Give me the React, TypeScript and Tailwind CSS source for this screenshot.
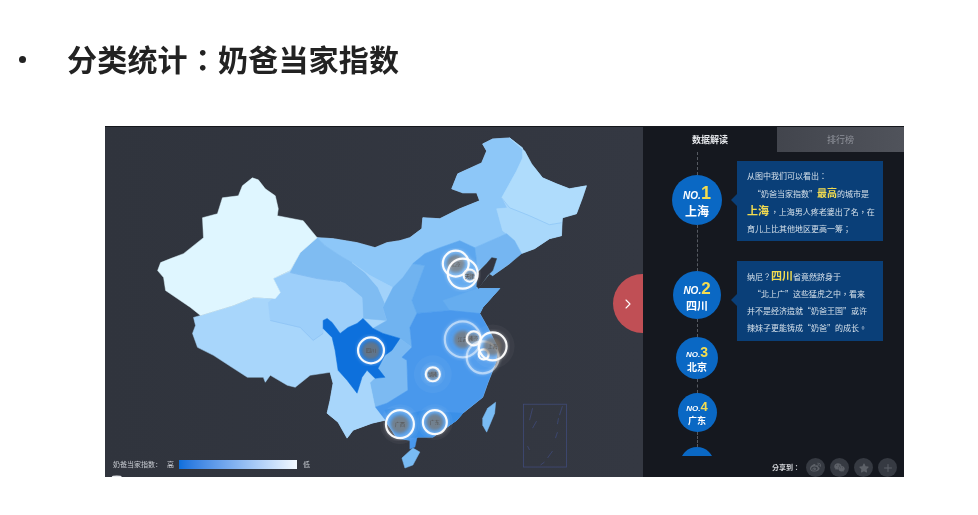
import React from "react";
import { ChevronRight, Plus } from "lucide-react";
import { FaWeibo, FaWeixin, FaStar } from "react-icons/fa";

const cjk = "font-['Noto_Sans_CJK_SC','Noto_Sans',sans-serif]";
const cjkCentered = "font-['Noto_Sans_CJK_TC','Noto_Sans',sans-serif]";

const provinces = [
  // mainland base, everything else is laid on top of it
  { fill: "#a8d6fb", points: "317,237 333,238 357,242 375,247 387,242 400,240 410,237 422,228 423,217 440,218 460,208 480,200 477,192 463,192 452,188 458,173 482,162 487,150 483,143 493,138 510,137 525,150 532,163 543,177 557,183 570,188 587,185 583,197 577,213 563,217 562,235 550,238 535,248 520,253 510,263 493,275 490,273 478,288 500,288 483,307 480,313 488,327 498,347 497,360 488,383 483,397 463,413 457,420 433,437 418,437 410,440 397,438 385,420 372,423 353,430 347,438 338,422 327,413 330,400 333,383 330,372 310,375 295,387 287,385 270,375 265,382 263,377 247,377 233,368 213,355 197,347 192,333 195,325 193,317 200,315 233,305 253,297 275,298 280,292 273,278 290,270 300,252" },
  { fill: "#8dc7f8", points: "317,237 333,238 357,242 375,247 387,242 400,240 410,237 422,228 423,217 440,218 460,208 480,200 477,192 463,192 452,188 458,173 482,162 487,150 483,143 493,138 510,137 523,147 523,157 517,170 502,197 507,207 497,208 503,230 507,233 475,247 460,240 440,247 425,253 413,263 403,277 393,287 370,275 352,262 340,255 325,245" },
  { fill: "#afdcfc", points: "510,137 525,150 532,163 543,177 557,183 570,188 587,185 583,197 577,213 563,217 562,222 550,224 540,220 530,215 510,207 502,197 517,170 523,157 523,147" },
  { fill: "#a9d8fb", points: "497,208 510,207 530,215 550,224 562,222 562,235 550,238 535,248 522,253 515,240 507,233 503,230" },
  { fill: "#74b6f2", points: "475,247 507,233 515,240 522,253 510,263 493,275 490,273 496,257 478,270" },
  { fill: "#7fbcf2", points: "317,237 325,245 340,255 352,262 365,272 378,287 386,305 387,320 363,318 362,297 345,283 340,281 317,278 290,272 300,252" },
  { fill: "#a2d2fa", points: "352,262 370,275 393,287 383,307 387,320 386,305 378,287 365,272" },
  { fill: "#9dcffa", points: "273,278 290,272 317,278 340,281 345,283 362,297 363,318 357,323 348,327 340,333 332,322 327,318 323,320 323,333 313,340 300,327 270,320 268,302 280,292" },
  { fill: "#dff6ff", points: "252,177 258,179 265,188 275,195 278,208 277,215 303,220 317,237 300,252 290,270 273,278 280,292 275,298 253,297 233,305 200,315 190,307 165,290 163,277 157,270 160,262 170,258 183,253 203,237 202,217 217,213 222,197 238,195 242,185" },
  { fill: "#6fb3f0", points: "393,287 403,277 413,263 425,265 412,300 417,313 410,327 412,347 400,338 383,333 373,328 387,320 383,307" },
  { fill: "#5ba6ee", points: "413,263 425,253 440,247 460,240 475,247 478,270 477,288 500,288 483,307 480,313 450,310 417,313 412,300 425,265" },
  { fill: "#66adef", points: "443,300 478,288 500,288 483,307 480,313 450,310" },
  { fill: "#7bbaf2", points: "385,355 400,338 412,347 402,357 407,360 408,390 387,403 375,407 370,383 375,378 385,377 378,368" },
  { fill: "#4998ec", points: "410,327 417,313 450,310 480,313 488,327 498,347 497,360 488,383 483,397 463,413 457,420 433,437 418,437 410,440 397,438 385,420 375,407 387,403 408,390 407,360 402,357 412,347" },
  { fill: "#3b90e8", points: "418,437 433,437 457,420 463,413 445,412 425,410 408,414 395,408 385,410 397,438 410,440" },
  { fill: "#a8d6fb", points: "330,372 338,370 347,380 357,393 363,377 370,383 375,407 385,420 372,423 353,430 347,438 338,422 327,413 330,400 333,383" },
  { fill: "#0b6fdc", points: "323,320 327,318 332,322 340,333 348,327 357,323 363,318 373,328 383,333 400,338 392,350 385,355 378,368 385,377 375,378 367,370 362,377 357,393 347,380 338,370 335,350 332,337 323,328" },
  { fill: "#79bbf3", points: "402,458 413,448 420,452 413,465 405,468" },
  { fill: "#79bbf3", points: "483,418 488,408 496,402 495,413 490,425 487,432 483,425" },
  { fill: "#4998ec", points: "410,438 417,438 415,447 410,449" },
  { fill: "#32363f", points: "492,257 497,258 493,270 488,275 479,288 477,286 478,272 487,263" },
];

const rings = [
  { x: 456, y: 263, r: 13, label: "北京", glow: 0 },
  { x: 463, y: 273, r: 15, label: "", glow: 0 },
  { x: 470, y: 275, r: 6, label: "天津", glow: 0 },
  { x: 463, y: 339, r: 18, label: "江苏", glow: 0 },
  { x: 474, y: 338, r: 7, label: "南京", glow: 0 },
  { x: 483, y: 357, r: 16, label: "", glow: 0 },
  { x: 484, y: 354, r: 5, label: "", glow: 0 },
  { x: 493, y: 346, r: 14, label: "上海", glow: 22 },
  { x: 433, y: 374, r: 7, label: "湖南", glow: 19 },
  { x: 400, y: 424, r: 14, label: "广西", glow: 20 },
  { x: 435, y: 422, r: 12, label: "广东", glow: 18 },
  { x: 371, y: 350, r: 13, label: "四川", glow: 0 },
];

const ranks = [
  { no: "1", city: "上海", size: "w-[50px] h-[50px]", noText: "text-[10px]", numText: "text-[18px]", cityText: "text-[12px]", before: "h-[23px]" },
  { no: "2", city: "四川", size: "w-[48px] h-[48px]", noText: "text-[10px]", numText: "text-[17px]", cityText: "text-[11px]", before: "h-[46px]" },
  { no: "3", city: "北京", size: "w-[42px] h-[42px]", noText: "text-[8px]", numText: "text-[14px]", cityText: "text-[10px]", before: "h-[18px]" },
  { no: "4", city: "广东", size: "w-[39px] h-[39px]", noText: "text-[8px]", numText: "text-[13px]", cityText: "text-[9px]", before: "h-[14px]" },
];

const MapDrawing = () => (
  <svg viewBox="105 126 538 351" className="absolute inset-0 w-full h-full">
    <defs>
      <filter id="soft">
        <feGaussianBlur stdDeviation="0.5" />
      </filter>
      <filter id="dot">
        <feGaussianBlur stdDeviation="1.4" />
      </filter>
    </defs>
    <g filter="url(#soft)">
      {provinces.map((p, i) => (
        <polygon key={i} points={p.points} fill={p.fill} stroke={p.fill} strokeWidth="0.5" strokeLinejoin="round" />
      ))}
      <polyline points="290,272 317,278 340,281" fill="none" stroke="#6daeea" strokeWidth="0.5" />
      <polyline points="270,320 300,327 313,340 323,333" fill="none" stroke="#84bdf0" strokeWidth="0.5" />
      <polyline points="502,197 510,207 530,215 550,224 562,222" fill="none" stroke="#80bdf2" strokeWidth="0.5" />
    </g>
    <g fill="none" stroke="#3f4a78" strokeWidth="0.8" filter="url(#soft)">
      <rect x="524" y="404" width="43" height="63" />
      <path d="M533 408 L530 420 M563 406 L560 415 M533 428 L537 421 M558 432 L556 438 M530 450 L528 446 M553 451 L548 458 M541 465 L545 462 M558 424 L559 418" />
    </g>
    <ellipse cx="116" cy="477" rx="5" ry="1.5" fill="#e8eaee" />
    {rings.map((m, i) => (
      <g key={i}>
        {m.glow > 0 && <circle cx={m.x} cy={m.y} r={m.glow} fill="#ffffff" fillOpacity="0.04" />}
        {m.glow > 0 && <circle cx={m.x} cy={m.y} r={m.glow * 0.65} fill="#ffffff" fillOpacity="0.05" />}
        <circle cx={m.x} cy={m.y} r={m.r} fill="#ffffff" fillOpacity="0.06" stroke="#ffffff" strokeOpacity="0.25" strokeWidth="3.5" filter="url(#dot)" />
        <circle cx={m.x} cy={m.y} r={m.r} fill="none" stroke="#ffffff" strokeOpacity={m.r > 15 ? 0.5 : 0.95} strokeWidth="2.2" filter="url(#soft)" />
        {m.label && <circle cx={m.x} cy={m.y} r={Math.min(m.r * 0.7, 9)} fill="#7d7468" fillOpacity="0.7" filter="url(#dot)" />}
        {m.label && (
          <text x={m.x} y={m.y + 2} textAnchor="middle" fontSize="5" fill="#53504e" filter="url(#soft)">
            {m.label}
          </text>
        )}
      </g>
    ))}
  </svg>
);

const RankBadge = ({ rank }: { rank: (typeof ranks)[number] }) => (
  <>
    <div className={`w-px border-l border-dashed border-[#565a62] ${rank.before}`} />
    <div className={`${rank.size} rounded-full bg-[#0a68c4] flex flex-col items-center justify-center text-white shrink-0`}>
      <div className="flex items-baseline leading-none">
        <span className={`${rank.noText} italic font-bold font-['Liberation_Sans',sans-serif]`}>NO.</span>
        <span className={`${rank.numText} font-bold text-[#f3dc50] font-['Liberation_Sans',sans-serif]`}>{rank.no}</span>
      </div>
      <div className={`${rank.cityText} font-bold leading-none mt-[3px]`}>{rank.city}</div>
    </div>
  </>
);

const Note = ({ children, className }: { children: React.ReactNode; className: string }) => (
  <div className={`relative w-[146px] h-[80px] bg-[#0a3f78] px-[10px] pt-[6px] text-[8px] leading-[17px] text-[#d5e0ea] whitespace-nowrap ${cjkCentered} ${className}`}>
    <div className="absolute left-[-6px] top-[33px] w-0 h-0 border-y-[6px] border-y-transparent border-r-[6px] border-r-[#0a3f78]" />
    {children}
  </div>
);

const Mark = ({ children, size }: { children: React.ReactNode; size: string }) => (
  <span className={`${size} font-bold text-[#f3dc50]`}>{children}</span>
);

export default function App() {
  return (
    <div className={`w-[978px] h-[515px] bg-white overflow-hidden ${cjk}`}>
      <div className="flex items-center h-[126px] pb-[11px] text-[#222] blur-[0.4px]">
        <span className="ml-[19px] mr-[41px] mt-[3px] w-[7px] h-[7px] rounded-full bg-[#222]" />
        <h1 className="text-[30px] font-bold leading-none tracking-[0.2px]">
          分类统计<span className={cjkCentered}>：</span>奶爸当家指数
        </h1>
      </div>
      <div className="ml-[105px] w-[799px] h-[351px] flex border-t border-[#15171c] blur-[0.5px]">
        <div className="relative w-[538px] bg-gradient-to-r from-[#30343d] to-[#343842] flex flex-col justify-end">
          <MapDrawing />
          <div className="relative flex items-center h-[8px] mb-[9px] ml-[8px] text-[7px] text-[#c8ccd2] whitespace-nowrap">
            <span className="w-[54px]">奶爸当家指数：</span>
            <span className="w-[12px]">高</span>
            <div className="w-[118px] h-[9px] bg-gradient-to-r from-[#0b6fdc] to-[#f2f9ff]" />
            <span className="ml-[6px]">低</span>
          </div>
          <button className="absolute right-0 top-[147px] w-[30px] h-[59px] rounded-l-full bg-[#c04f55] flex items-center justify-center">
            <ChevronRight className="w-[16px] h-[16px] text-white" strokeWidth={1.6} />
          </button>
        </div>
        <div className="flex-1 bg-[#15181f] flex flex-col">
          <div className="flex h-[25px] text-[9px] font-bold">
            <div className="w-[134px] flex items-center justify-center text-[#e4e6ea]">数据解读</div>
            <div className="flex-1 flex items-center justify-center bg-gradient-to-r from-[#42454d] to-[#50535b] text-[#8f929a] font-normal">排行榜</div>
          </div>
          <div className="flex flex-1">
            <div className="w-[108px] flex flex-col items-center">
              {ranks.map((r) => (
                <RankBadge key={r.no} rank={r} />
              ))}
              <div className="w-px h-[15px] border-l border-dashed border-[#565a62]" />
              <div className="w-[34px] h-[9px] overflow-hidden">
                <div className="w-[34px] h-[34px] rounded-full bg-[#0a68c4]" />
              </div>
            </div>
            <div className="flex flex-col pt-[9px] ml-[-14px]">
              <Note className="">
                <div>从图中我们可以看出：</div>
                <div className="pl-[6px]">“奶爸当家指数”<Mark size="text-[10px]">最高</Mark>的城市是</div>
                <div><Mark size="text-[11px]">上海</Mark> ，上海男人疼老婆出了名，在</div>
                <div>育儿上比其他地区更高一筹；</div>
              </Note>
              <Note className="mt-[20px]">
                <div>纳尼？<Mark size="text-[11px]">四川</Mark>省竟然跻身于</div>
                <div className="pl-[6px]">“北上广”这些猛虎之中，看来</div>
                <div>并不是经济造就“奶爸王国”或许</div>
                <div>辣妹子更能铸成“奶爸”的成长。</div>
              </Note>
              <div className="mt-auto mr-[-14px] h-[19px] flex items-center justify-end gap-[5px] text-[7px] text-[#d5d7db]">
                <span className={`mr-[1px] font-bold ${cjkCentered}`}>分享到：</span>
                <span className="w-[19px] h-[19px] rounded-full bg-[#363a42] flex items-center justify-center text-[#5d6168]"><FaWeibo size={11} /></span>
                <span className="w-[19px] h-[19px] rounded-full bg-[#363a42] flex items-center justify-center text-[#5d6168]"><FaWeixin size={11} /></span>
                <span className="w-[19px] h-[19px] rounded-full bg-[#363a42] flex items-center justify-center text-[#5d6168]"><FaStar size={10} /></span>
                <span className="w-[19px] h-[19px] rounded-full bg-[#363a42] flex items-center justify-center text-[#5d6168]"><Plus size={12} /></span>
              </div>
            </div>
          </div>
        </div>
      </div>
    </div>
  );
}
